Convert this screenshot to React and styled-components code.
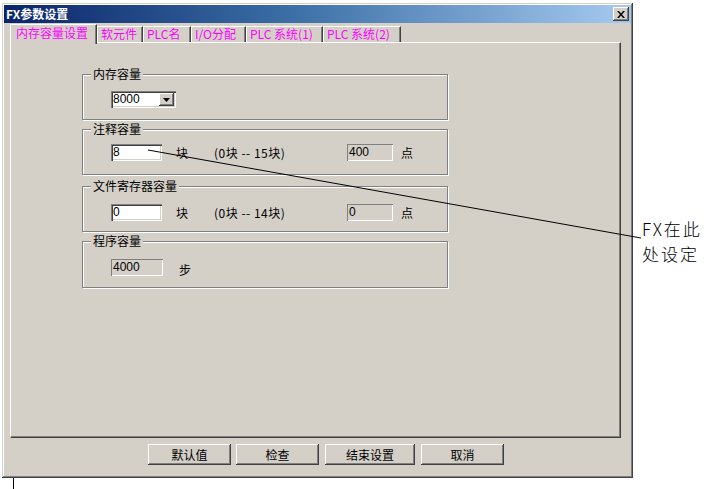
import styled, { createGlobalStyle } from 'styled-components'

const GlobalStyle = createGlobalStyle`
    html, body {
        margin: 0;
        padding: 0;
        background: #fff;
    }
    body {
        font-family: "Noto Sans CJK SC", "DejaVu Sans", sans-serif;
        font-size: 12px;
    }
`

const FACE = '#d4d0c8'

const Page = styled.div`
    position: relative;
    width: 717px;
    height: 489px;
    overflow: hidden;
    background: #fff;
`

const Window = styled.div`
    margin: 3px 0 0 2px;
    width: 631px;
    height: 475px;
    box-sizing: border-box;
    padding: 2px;
    background: ${FACE};
    box-shadow: inset -1px -1px #404040, inset 1px 1px ${FACE}, inset -2px -2px #808080, inset 2px 2px #fff;
    display: flex;
    flex-direction: column;
`

const TitleBar = styled.div`
    height: 18px;
    display: flex;
    align-items: center;
    justify-content: space-between;
    padding: 0 2px 0 2px;
    background: linear-gradient(to right, #0a246a, #3a6ea5 45%, #a6caf0);
    color: #fff;
    font-weight: bold;
    font-size: 12px;
    line-height: 18px;
`

const CloseButton = styled.div`
    width: 16px;
    height: 14px;
    box-sizing: border-box;
    background: ${FACE};
    box-shadow: inset -1px -1px #404040, inset 1px 1px #fff, inset -2px -2px #808080;
    display: flex;
    align-items: center;
    justify-content: center;
`

const TabStrip = styled.div`
    display: flex;
    align-items: flex-end;
    height: 18px;
    margin: 1px 0 0 6px;
    position: relative;
    z-index: 1;
`

const Tab = styled.div`
    width: ${p => p.$w}px;
    height: ${p => (p.$active ? 20 : 16)}px;
    margin-bottom: ${p => (p.$active ? -2 : 0)}px;
    box-sizing: border-box;
    padding-left: ${p => (p.$active ? 5 : 3)}px;
    background: ${FACE};
    border-left: 1px solid #fff;
    border-top: 1px solid #fff;
    border-right: 1px solid #404040;
    box-shadow: inset -1px 0 #808080;
    color: #ff00ff;
    font-size: 12px;
    line-height: ${p => (p.$active ? 16 : 14)}px;
    white-space: nowrap;
`

const TabPanel = styled.div`
    margin-left: 6px;
    width: 611px;
    height: 396px;
    box-sizing: border-box;
    padding: 31px 0 0 71px;
    border-top: 1px solid #fff;
    border-left: 1px solid #fff;
    border-right: 1px solid #404040;
    border-bottom: 1px solid #404040;
    box-shadow: inset -1px -1px #808080;
    display: flex;
    flex-direction: column;
`

const Group = styled.div`
    position: relative;
    width: 366px;
    height: ${p => p.$h}px;
    margin-top: ${p => p.$top}px;
    box-sizing: border-box;
    border: 1px solid #808080;
    box-shadow: 1px 1px #fff, inset 1px 1px #fff;
    padding: ${p => p.$pt}px 0 0 28px;
`

const GroupLabel = styled.span`
    position: absolute;
    left: 8px;
    top: -9px;
    padding: 0 2px;
    background: ${FACE};
    font-size: 12px;
    line-height: 16px;
    color: #000;
`

const Row = styled.div`
    display: grid;
    grid-template-columns: 65px 38px 133px 54px auto;
    align-items: center;
    height: 17px;
`

const Field = styled.div`
    width: ${p => p.$w || 51}px;
    height: 17px;
    box-sizing: border-box;
    padding-left: 2px;
    background: ${p => (p.$readonly ? FACE : '#fff')};
    box-shadow: ${p => (p.$readonly
        ? 'inset 1px 1px #808080, inset -1px -1px #fff'
        : 'inset 1px 1px #808080, inset 2px 2px #404040, inset -1px -1px #fff, inset -2px -2px ' + FACE)};
    font-family: "Liberation Sans", "DejaVu Sans", sans-serif;
    font-size: 12px;
    line-height: 17px;
    color: #000;
`

const Combo = styled(Field)`
    width: 65px;
    display: flex;
    align-items: center;
    justify-content: space-between;
    padding-right: 2px;
`

const DropButton = styled.div`
    width: 15px;
    height: 13px;
    box-sizing: border-box;
    background: ${FACE};
    box-shadow: inset -1px -1px #404040, inset 1px 1px #fff, inset -2px -2px #808080;
    display: flex;
    align-items: center;
    justify-content: center;
`

const Text = styled.span`
    font-size: 12px;
    line-height: 17px;
    color: #000;
    padding-top: ${p => p.$drop || 0}px;
    letter-spacing: ${p => p.$spread || 0}px;
    white-space: pre;
`

const ButtonRow = styled.div`
    display: flex;
    margin: 6px 0 0 144px;
`

const Button = styled.div`
    width: ${p => p.$w}px;
    height: 21px;
    margin-left: ${p => p.$gap || 0}px;
    box-sizing: border-box;
    background: ${FACE};
    box-shadow: inset -1px -1px #404040, inset 1px 1px #fff, inset -2px -2px #808080;
    display: flex;
    align-items: center;
    justify-content: center;
    font-size: 12px;
    color: #000;
`

const Callout = styled.svg`
    position: absolute;
    left: 0;
    top: 0;
    pointer-events: none;
`

const CalloutText = styled.div`
    position: absolute;
    left: 642px;
    top: 216px;
    display: flex;
    flex-direction: column;
`

const CalloutLine = styled.div`
    height: 25px;
    font-size: 17px;
    line-height: 25px;
    font-weight: 300;
    color: #000;
    letter-spacing: 2px;
    white-space: nowrap;
`

const tabs = [
    { label: '内存容量设置', w: 87, active: true },
    { label: '软元件', w: 46 },
    { label: 'PLC名', w: 48 },
    { label: 'I/O分配', w: 55 },
    { label: 'PLC 系统(1)', w: 77 },
    { label: 'PLC 系统(2)', w: 78 },
]

export default function App() {
    return (
        <Page>
            <GlobalStyle />
            <Window>
                <TitleBar>
                    <span>FX参数设置</span>
                    <CloseButton>
                        <svg width="8" height="7" viewBox="0 0 8 7">
                            <path d="M0 0 L2 0 L4 2.5 L6 0 L8 0 L5 3.5 L8 7 L6 7 L4 4.5 L2 7 L0 7 L3 3.5 Z" fill="#000" />
                        </svg>
                    </CloseButton>
                </TitleBar>
                <TabStrip>
                    {tabs.map(t => (
                        <Tab key={t.label} $w={t.w} $active={t.active}>{t.label}</Tab>
                    ))}
                </TabStrip>
                <TabPanel>
                    <Group $h={46} $top={0} $pt={16}>
                        <GroupLabel>内存容量</GroupLabel>
                        <Row>
                            <Combo>
                                <span>8000</span>
                                <DropButton>
                                    <svg width="7" height="4" viewBox="0 0 7 4">
                                        <path d="M0 0 H7 L3.5 4 Z" fill="#000" />
                                    </svg>
                                </DropButton>
                            </Combo>
                        </Row>
                    </Group>
                    <Group $h={46} $top={9} $pt={14}>
                        <GroupLabel>注释容量</GroupLabel>
                        <Row>
                            <Field>8</Field>
                            <Text>块</Text>
                            <Text $spread={0.5}>(0块 -- 15块)</Text>
                            <Field $readonly $w={46}>400</Field>
                            <Text>点</Text>
                        </Row>
                    </Group>
                    <Group $h={46} $top={11} $pt={17}>
                        <GroupLabel>文件寄存器容量</GroupLabel>
                        <Row>
                            <Field>0</Field>
                            <Text>块</Text>
                            <Text $spread={0.5}>(0块 -- 14块)</Text>
                            <Field $readonly $w={46}>0</Field>
                            <Text>点</Text>
                        </Row>
                    </Group>
                    <Group $h={47} $top={9} $pt={15}>
                        <GroupLabel>程序容量</GroupLabel>
                        <Row>
                            <Field $readonly $w={52}>4000</Field>
                            <Text $drop={4} style={{ paddingLeft: 3 }}>步</Text>
                        </Row>
                    </Group>
                </TabPanel>
                <ButtonRow>
                    <Button $w={83}>默认值</Button>
                    <Button $w={83} $gap={5}>检查</Button>
                    <Button $w={90} $gap={6}>结束设置</Button>
                    <Button $w={83} $gap={6}>取消</Button>
                </ButtonRow>
            </Window>
            <Callout width="717" height="489" viewBox="0 0 717 489">
                <path d="M148 150 L641 238" stroke="#000" strokeWidth="1" fill="none" />
                <path d="M13.5 478 V489" stroke="#000" strokeWidth="1" fill="none" />
            </Callout>
            <CalloutText>
                <CalloutLine>FX在此</CalloutLine>
                <CalloutLine>处设定</CalloutLine>
            </CalloutText>
        </Page>
    )
}
